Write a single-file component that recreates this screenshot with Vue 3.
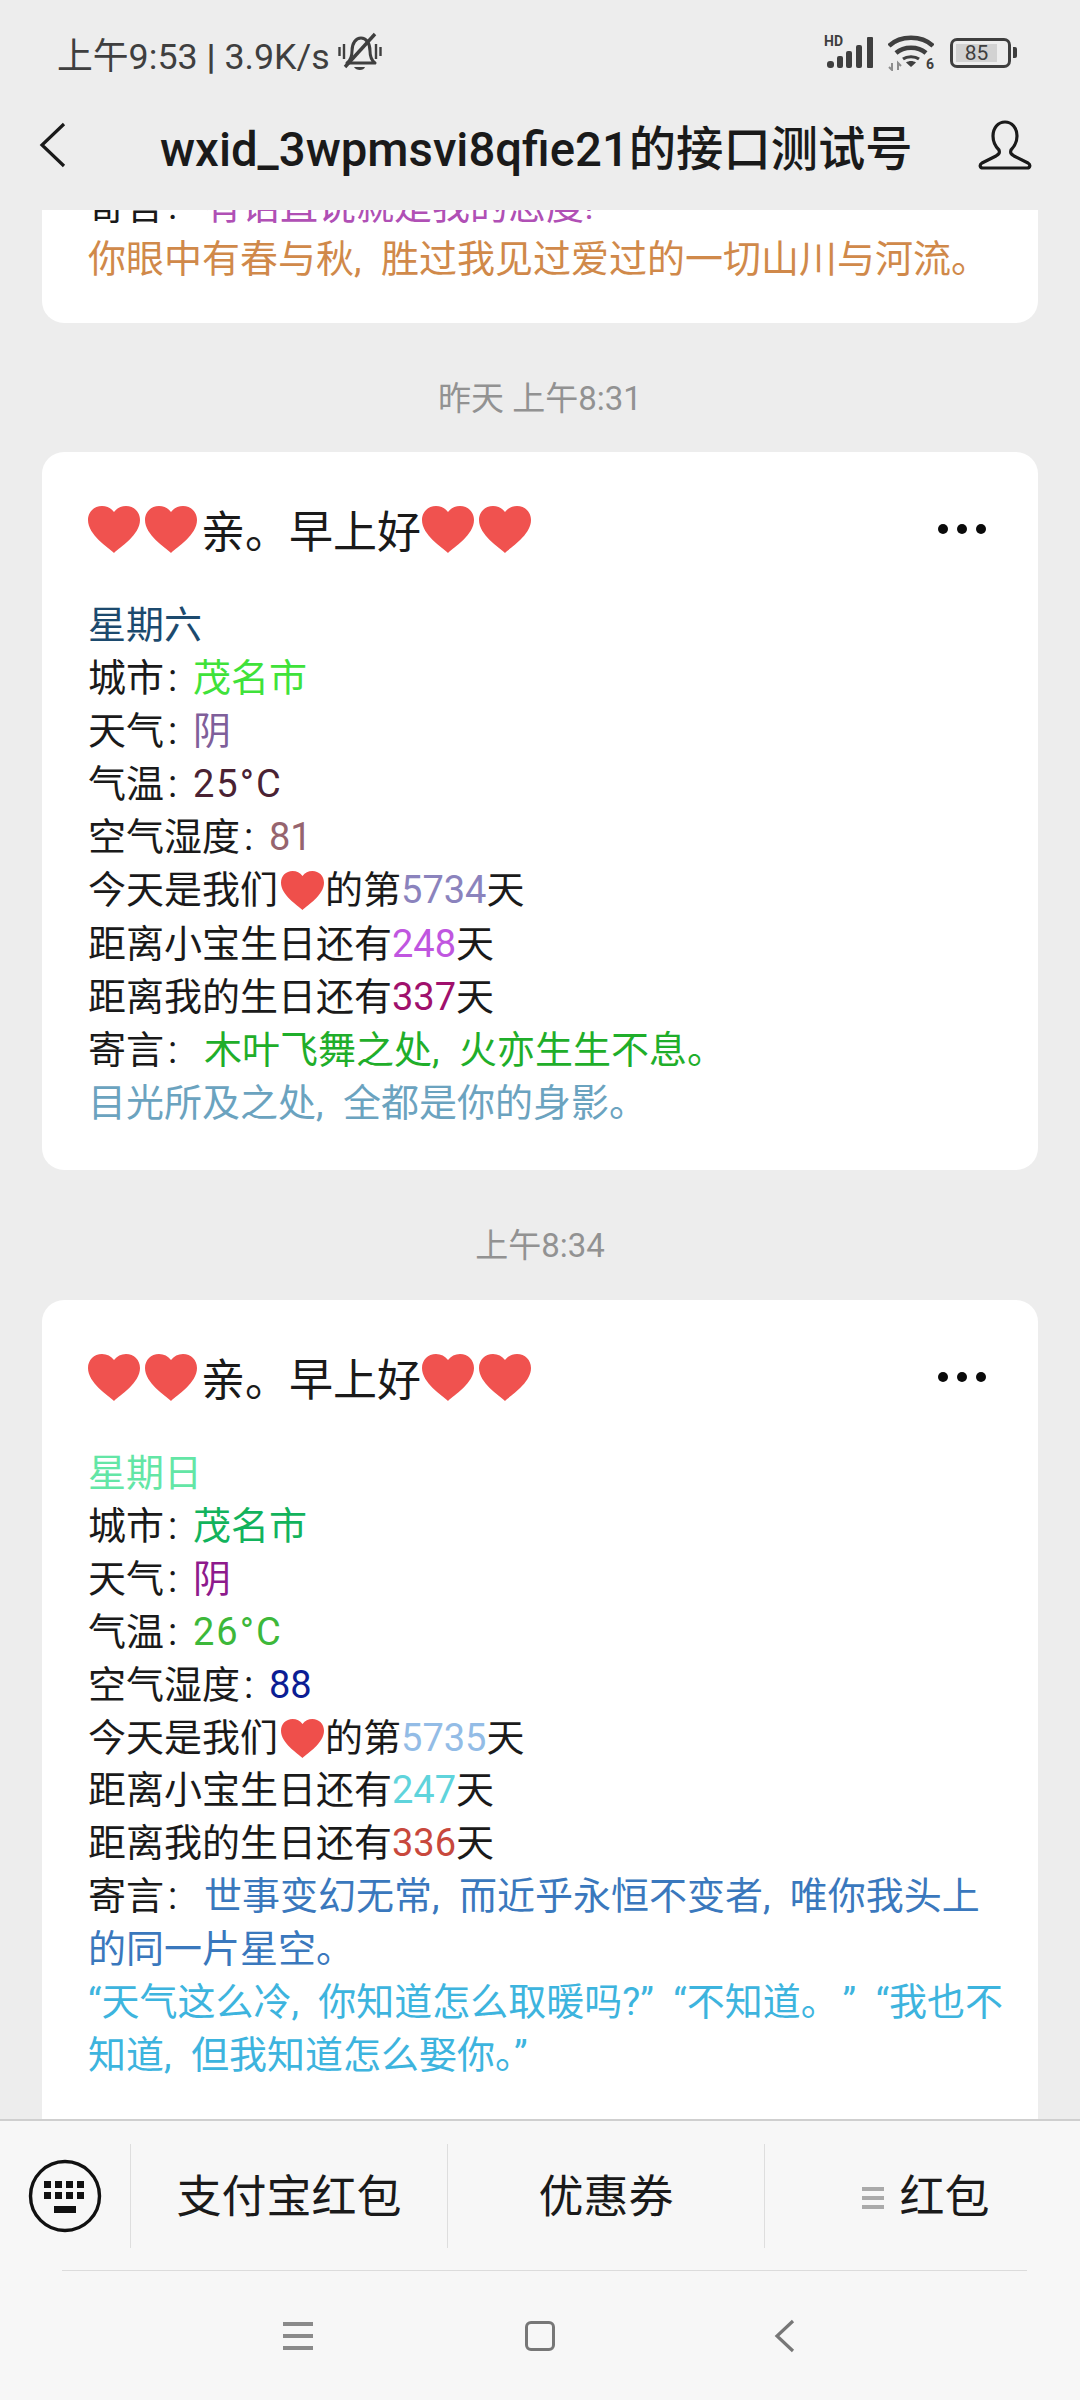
<script setup>
const heart = 'M26 47C20 41 0 29 0 14 0 6 6 0 14 0c5 0 9 2 12 6 3-4 7-6 12-6 8 0 14 6 14 14 0 15-20 27-26 33Z'
const cards = [
  {
    id: 'b', day: '星期六', dayC: '#1c4a6e', city: '#3fe23a', sky: '#7f5f9a', temp: '25°C', tempC: '#4a2233', hum: '81', humC: '#96646e',
    days: '5734', daysC: '#8b83bd', a: '248', aC: '#c056e0', b: '337', bC: '#a0106c',
    note: ['木叶飞舞之处, 火亦生生不息。'], noteC: '#1fae2a', extra: ['目光所及之处, 全都是你的身影。'], extraC: '#6ba3bf'
  },
  {
    id: 'c', day: '星期日', dayC: '#63e6a6', city: '#12b35c', sky: '#8e1a8c', temp: '26°C', tempC: '#3db83a', hum: '88', humC: '#0b1d94',
    days: '5735', daysC: '#93bce6', a: '247', aC: '#5fd4dc', b: '336', bC: '#c8483c',
    note: ['世事变幻无常, 而近乎永恒不变者, 唯你我头上', '的同一片星空。'], noteC: '#3a78bd',
    extra: ['“天气这么冷, 你知道怎么取暖吗?” “不知道。\u200a” “我也不', '知道, 但我知道怎么娶你。”'], extraC: '#3db4de'
  }
]
const stamps = { b: '昨天 上午8:31', c: '上午8:34' }
</script>

<template>
  <div class="phone">
    <header class="status">
      <div class="status-left">
        <span>上午9:53 <b>|</b> 3.9K/s</span>
        <svg class="mute" width="44" height="42" viewBox="0 0 44 42" fill="none" stroke="#3f3f3f" stroke-width="3">
          <path d="M9 31c4-3 5-7 5-12 0-8 4-13 9-13s9 5 9 13c0 5 1 9 5 12Z" stroke-linejoin="round" />
          <path d="M16 35h11c-1 4-9 4-11 0Z" fill="#3f3f3f" stroke="none" />
          <path d="M37 2 7 35" stroke-width="3.400" />
          <path d="M1.500 15v9M6 12v15M38 12v15M42.500 15v9" stroke-width="2.400" />
        </svg>
      </div>
      <div class="status-right">
        <div class="sig-wrap">
          <span class="hd">HD</span>
          <svg width="50" height="33" viewBox="0 0 50 33">
            <rect x="3" y="25" width="7" height="7" rx="3" fill="#3f3f3f" />
            <rect x="13" y="20" width="6" height="12" rx="2" fill="#3f3f3f" />
            <rect x="22" y="15" width="6" height="17" rx="2" fill="#3f3f3f" />
            <rect x="32" y="9" width="6" height="23" rx="2" fill="#3f3f3f" />
            <rect x="43" y="1" width="6" height="31" rx="1" fill="#3f3f3f" />
          </svg>
        </div>
        <div class="wifi-wrap">
          <svg width="46" height="36" viewBox="0 0 46 36" fill="none" stroke="#3f3f3f" stroke-width="4.500">
            <path d="M1 11C12 0 34 0 45 11" />
            <path d="M8 18c8-7 22-7 30 0" />
            <path d="M15 24c4-3 12-3 16 0" stroke-width="3" />
            <path d="M18 27.500 23 32l5-4.500c-3-2-7-2-10 0Z" fill="#3f3f3f" stroke="none" />
            <path d="M4 28v7l-3-3M10 35v-7l3 3" stroke="#8d8d8d" stroke-width="2" />
          </svg>
          <span class="six">6</span>
        </div>
        <div class="battery">
          <div class="battery-body"><span class="battery-level">85</span></div>
          <i class="battery-cap"></i>
        </div>
      </div>
    </header>

    <nav class="topbar">
      <svg class="back" width="30" height="48" viewBox="0 0 30 48" fill="none" stroke="#1a1a1a" stroke-width="3.200">
        <path d="M26 3 4 24l22 21" />
      </svg>
      <div class="title">wxid_3wpmsvi8qfie21的接口测试号</div>
      <svg class="person" width="54" height="50" viewBox="0 0 54 50" fill="none" stroke="#1a1a1a" stroke-width="3.200" stroke-linejoin="round">
        <path d="M27 2c7 0 12 6 12 14 0 7-3 11-6 14-1 3 0 4 3 6l14 7c3 2 2 5-1 5H5c-3 0-4-3-1-5l14-7c3-2 4-3 3-6-3-3-6-7-6-14C15 8 20 2 27 2Z" />
      </svg>
    </nav>

    <main class="chat">
      <section class="card card-clip">
        <p class="row">寄言<span class="colon colon-note">:</span><span class="clip-note">有话直说就是我的态度!</span></p>
        <p class="row clip-extra">你眼中有春与秋, 胜过我见过爱过的一切山川与河流。</p>
      </section>

      <template v-for="c in cards" :key="c.id">
        <div class="stamp" :class="'stamp-' + c.id">{{ stamps[c.id] }}</div>
        <section class="card" :class="'card-' + c.id">
          <div class="card-head">
            <h2 class="card-title">
              <svg class="heart" viewBox="0 0 52 47"><path :d="heart" fill="#f0524f" /></svg>
              <svg class="heart" viewBox="0 0 52 47"><path :d="heart" fill="#f0524f" /></svg>
              <span class="greet">亲。早上好</span>
              <svg class="heart" viewBox="0 0 52 47"><path :d="heart" fill="#f0524f" /></svg>
              <svg class="heart" viewBox="0 0 52 47"><path :d="heart" fill="#f0524f" /></svg>
            </h2>
            <div class="more"><i></i><i></i><i></i></div>
          </div>
          <div class="rows">
            <p class="row" :style="{ color: c.dayC }">{{ c.day }}</p>
            <p class="row">城市<span class="colon">:</span><span :style="{ color: c.city }">茂名市</span></p>
            <p class="row">天气<span class="colon">:</span><span :style="{ color: c.sky }">阴</span></p>
            <p class="row">气温<span class="colon">:</span><span class="temp" :style="{ color: c.tempC }">{{ c.temp }}</span></p>
            <p class="row">空气湿度<span class="colon">:</span><span :style="{ color: c.humC }">{{ c.hum }}</span></p>
            <p class="row">今天是我们<svg class="heart heart-sm" viewBox="0 0 52 47"><path :d="heart" fill="#ef4f4b" /></svg>的第<span :style="{ color: c.daysC }">{{ c.days }}</span>天</p>
            <p class="row">距离小宝生日还有<span :style="{ color: c.aC }">{{ c.a }}</span>天</p>
            <p class="row">距离我的生日还有<span :style="{ color: c.bC }">{{ c.b }}</span>天</p>
            <p class="row">寄言<span class="colon colon-note">:</span><span :style="{ color: c.noteC }">{{ c.note[0] }}</span></p>
            <p v-for="l in c.note.slice(1)" :key="l" class="row" :style="{ color: c.noteC }">{{ l }}</p>
            <p v-for="l in c.extra" :key="l" class="row" :style="{ color: c.extraC }">{{ l }}</p>
          </div>
        </section>
      </template>
    </main>

    <footer class="bottom">
      <div class="menu">
        <div class="kbd-cell">
          <svg width="74" height="74" viewBox="0 0 74 74">
            <circle cx="37" cy="37" r="34.500" fill="none" stroke="#111" stroke-width="3.400" />
            <g fill="#111">
              <rect x="16" y="22" width="7" height="7" /><rect x="27" y="22" width="7" height="7" /><rect x="38" y="22" width="7" height="7" /><rect x="49" y="22" width="7" height="7" />
              <rect x="16" y="33" width="7" height="7" /><rect x="27" y="33" width="7" height="7" /><rect x="38" y="33" width="7" height="7" /><rect x="49" y="33" width="7" height="7" />
              <rect x="26" y="47" width="22" height="7" />
            </g>
          </svg>
        </div>
        <div class="menu-item item-a">支付宝红包</div>
        <div class="menu-item item-b">优惠券</div>
        <div class="menu-item item-c"><span class="mini-lines"><i></i><i></i><i></i></span>红包</div>
      </div>
      <div class="sysnav">
        <div class="sys-lines"><i></i><i></i><i></i></div>
        <div class="sys-home"></div>
        <svg width="22" height="34" viewBox="0 0 22 34" fill="none" stroke="#777" stroke-width="3.200"><path d="M19 2 3 17l16 15" /></svg>
      </div>
    </footer>
  </div>
</template>

<style>
html, body { margin: 0; background: #ededed; }
</style>

<style scoped>
.phone {
  width: 1080px;
  height: 2400px;
  background: #ededed;
  display: flex;
  flex-direction: column;
  overflow: hidden;
  font-family: "Roboto", "Noto Sans CJK SC", sans-serif;
  color: #1a1a1a;
}
.status {
  height: 105px;
  flex: none;
  display: flex;
  justify-content: space-between;
  align-items: center;
  padding: 0 63px 0 57px;
  box-sizing: border-box;
  color: #3f3f3f;
  font-size: 35.800px;
}
.status-left, .status-right { display: flex; align-items: center; }
.status-left { gap: 8px; }
.status-left b { font-weight: 700; }
.status-right { gap: 14px; }
.sig-wrap, .wifi-wrap { position: relative; display: flex; }
.hd {
  position: absolute;
  left: 0;
  top: -2px;
  font-size: 14px;
  line-height: 14px;
  font-weight: 700;
}
.six {
  position: absolute;
  right: 0;
  bottom: 0;
  font-size: 14px;
  line-height: 14px;
  font-weight: 700;
}
.battery { display: flex; align-items: center; gap: 2px; margin-left: 2px; }
.battery-body {
  width: 61px;
  height: 30px;
  box-sizing: border-box;
  border: 3px solid #3f3f3f;
  border-radius: 7px;
  padding: 3px 0 3px 3px;
  display: flex;
}
.battery-level {
  width: 41px;
  background: #d2d2d2;
  font-size: 21px;
  line-height: 18px;
  text-align: center;
  color: #3f3f3f;
}
.battery-cap { width: 4px; height: 11px; background: #3f3f3f; border-radius: 0 2px 2px 0; }
.topbar {
  height: 105px;
  flex: none;
  display: flex;
  align-items: center;
  padding: 0 48px 25px 38px;
  box-sizing: border-box;
}
.back { flex: none; margin-right: 92px; }
.title { flex: 1; font-size: 47.300px; font-weight: 500; white-space: nowrap; color: #1a1a1a; }
.person { flex: none; }
.chat { flex: 1; min-height: 0; overflow: hidden; }
.card {
  width: 996px;
  margin-left: 42px;
  box-sizing: border-box;
  background: #fff;
  border-radius: 22px;
  padding: 0 46px;
}
.card-clip {
  height: 143px;
  margin-top: -30px;
  border-radius: 0 0 22px 22px;
}
.clip-note { color: #b050b5; }
.row.clip-extra { color: #d0894a; }
.stamp {
  text-align: center;
  font-size: 33px;
  line-height: 40px;
  color: #929292;
}
.stamp-b { padding-top: 56px; padding-bottom: 33px; }
.stamp-c { padding-top: 56px; padding-bottom: 34px; }
.card-b { height: 718px; padding-top: 46px; }
.card-c { height: 900px; padding-top: 46px; }
.card-head { display: flex; justify-content: space-between; align-items: center; height: 62px; }
.card-title {
  margin: 0;
  display: flex;
  align-items: center;
  font-size: 44px;
  font-weight: 400;
  color: #1a1a1a;
}
.heart { width: 52px; height: 47px; margin-right: 5px; flex: none; }
.heart-sm { width: 43px; height: 39px; margin: 0 1px 0 3px; vertical-align: -7px; }
.greet { margin: 0 1px 0 -1px; }
.more { display: flex; gap: 9px; margin-right: 6px; }
.more i { width: 10px; height: 10px; border-radius: 50%; background: #0a0a0a; }
.rows { padding-top: 39px; }
.row {
  margin: 0;
  font-size: 38px;
  line-height: 53.100px;
  word-spacing: 10px;
  white-space: nowrap;
  color: #1a1a1a;
}
.card-c .row { line-height: 52.900px; }
.colon { display: inline-block; width: 25px; padding-left: 4px; color: #1a1a1a; }
.colon-note { width: 36px; }
.temp { letter-spacing: 2px; }
.bottom { height: 281px; flex: none; background: #f7f7f7; border-top: 2px solid #cfcfcf; box-sizing: border-box; }
.menu {
  height: 149px;
  display: flex;
  margin: 0 53px 0 0;
}
.kbd-cell { width: 130px; flex: none; display: flex; align-items: center; justify-content: center; }
.menu-item {
  display: flex;
  align-items: center;
  justify-content: center;
  font-size: 45px;
  line-height: 60px;
  padding-top: 4px;
  color: #1a1a1a;
  border-left: 1px solid #dedede;
  margin: 23px 0 22px;
}
.item-a { width: 316px; }
.item-b { width: 316px; }
.item-c { flex: 1; padding-left: 60px; }
.mini-lines { display: flex; flex-direction: column; gap: 5px; margin-right: 15px; }
.mini-lines i { width: 22px; height: 4px; background: #aaa; }
.sysnav {
  margin: 0 53px 0 62px;
  border-top: 1px solid #dcdcdc;
  height: 129px;
  display: flex;
  align-items: center;
  padding-left: 221px;
}
.sys-lines { display: flex; flex-direction: column; gap: 8px; width: 30px; }
.sys-lines i { height: 4px; background: #8a8a8a; }
.sys-home { width: 24px; height: 24px; border: 3.500px solid #777; border-radius: 6px; margin-left: 212px; }
.sysnav svg { margin-left: 219px; }
</style>
